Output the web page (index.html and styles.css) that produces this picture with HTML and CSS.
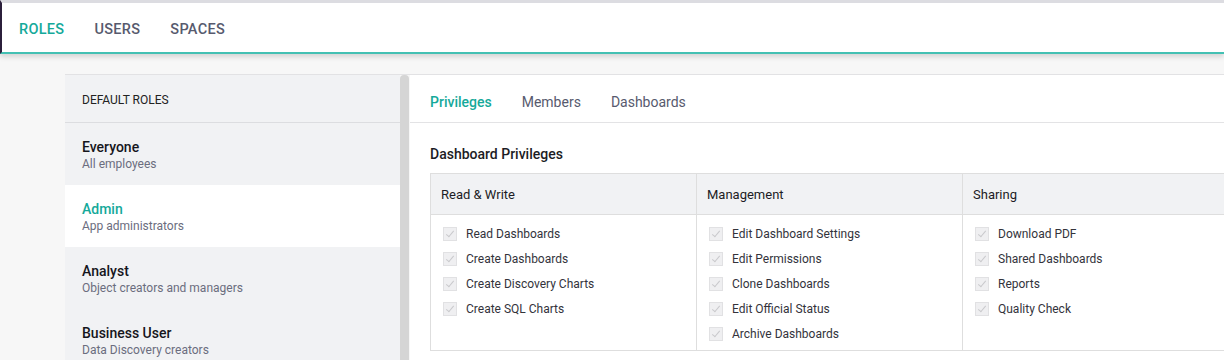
FILE: index.html
```html
<!DOCTYPE html>
<html lang="en">
<head>
  <meta charset="UTF-8">
  <meta name="viewport" content="width=device-width, initial-scale=1.0">
  <title>Roles</title>
  <link rel="stylesheet" href="styles.css">
</head>
<body>

<header class="topbar">
  <nav class="top-tabs">
    <a class="top-tab active">ROLES</a>
    <a class="top-tab">USERS</a>
    <a class="top-tab">SPACES</a>
  </nav>
</header>

<main class="page">
  <aside class="roles">
    <div class="roles-list">
      <div class="roles-head">DEFAULT ROLES</div>
      <div class="role">
        <div class="role-name">Everyone</div>
        <div class="role-desc">All employees</div>
      </div>
      <div class="role selected">
        <div class="role-name">Admin</div>
        <div class="role-desc">App administrators</div>
      </div>
      <div class="role">
        <div class="role-name">Analyst</div>
        <div class="role-desc">Object creators and managers</div>
      </div>
      <div class="role">
        <div class="role-name">Business User</div>
        <div class="role-desc">Data Discovery creators</div>
      </div>
    </div>
    <div class="scrollbar"></div>
  </aside>

  <section class="detail">
    <nav class="sub-tabs">
      <a class="sub-tab active">Privileges</a>
      <a class="sub-tab">Members</a>
      <a class="sub-tab">Dashboards</a>
    </nav>

    <div class="detail-body">
      <h3>Dashboard Privileges</h3>

      <div class="priv-table">
        <div class="priv-col">
          <div class="priv-head">Read &amp; Write</div>
          <ul class="priv-list">
            <li><span class="check"></span>Read Dashboards</li>
            <li><span class="check"></span>Create Dashboards</li>
            <li><span class="check"></span>Create Discovery Charts</li>
            <li><span class="check"></span>Create SQL Charts</li>
          </ul>
        </div>
        <div class="priv-col">
          <div class="priv-head">Management</div>
          <ul class="priv-list">
            <li><span class="check"></span>Edit Dashboard Settings</li>
            <li><span class="check"></span>Edit Permissions</li>
            <li><span class="check"></span>Clone Dashboards</li>
            <li><span class="check"></span>Edit Official Status</li>
            <li><span class="check"></span>Archive Dashboards</li>
          </ul>
        </div>
        <div class="priv-col">
          <div class="priv-head">Sharing</div>
          <ul class="priv-list">
            <li><span class="check"></span>Download PDF</li>
            <li><span class="check"></span>Shared Dashboards</li>
            <li><span class="check"></span>Reports</li>
            <li><span class="check"></span>Quality Check</li>
          </ul>
        </div>
      </div>
    </div>
  </section>
</main>

</body>
</html>
```

FILE: styles.css
```css
body {
  margin: 0;
  font-family: Roboto, "Liberation Sans", Arial, sans-serif;
  background-color: #f7f7f7;
  color: #1c1c24;
  overflow: hidden;
}
.topbar {
  height: 49px;
  background-color: white;
  border-top: 3px solid #dcdce1;
  border-left: 2px solid #2b1f3b;
  border-bottom: 2px solid #43c0b3;
  box-shadow: 0px 3px 5px rgba(0, 0, 0, 0.14);
}
.top-tabs {
  display: flex;
  gap: 30px;
  padding-left: 17px;
  height: 49px;
  align-items: center;
}
.top-tab {
  font-size: 14.5px;
  font-weight: 500;
  letter-spacing: 0.3px;
  color: #575a6e;
  padding-top: 4px;
}
.top-tab.active {
  color: #15a99a;
}
.page {
  display: flex;
  padding: 20px 0 0 65px;
}
.roles {
  display: flex;
  width: 345px;
  flex-shrink: 0;
  border-top: 1px solid #e2e2e4;
}
.roles-list {
  flex: 1;
  background-color: #f1f2f4;
}
.scrollbar {
  width: 9px;
  margin-right: 1px;
  background-color: #d5d5d5;
  border-radius: 4px 4px 0 0;
}
.roles-head {
  height: 47px;
  line-height: 51px;
  padding-left: 17px;
  font-size: 12px;
  color: #222;
  border-bottom: 1px solid #dcdde0;
}
.role {
  height: 62px;
  padding: 15px 0 0 17px;
  box-sizing: border-box;
}
.role.selected {
  background-color: white;
}
.role-name {
  font-size: 14px;
  font-weight: 500;
  color: #16161c;
  line-height: 18px;
}
.role.selected .role-name {
  color: #15a99a;
}
.role-desc {
  font-size: 12px;
  color: #6b6d7e;
  line-height: 16px;
}
.detail {
  flex: 1;
  background-color: white;
  border-top: 1px solid #e2e2e4;
  min-width: 0;
}
.sub-tabs {
  display: flex;
  gap: 30px;
  height: 47px;
  padding: 0 0 0 20px;
  align-items: center;
  border-bottom: 1px solid #e3e3e5;
}
.sub-tab {
  font-size: 14px;
  color: #575a6e;
  padding-top: 7px;
}
.sub-tab.active {
  color: #15a99a;
  font-weight: 500;
}
.detail-body {
  padding: 21px 0 0 20px;
}
h3 {
  margin: 0 0 9px 0;
  font-size: 14px;
  font-weight: 500;
  line-height: 20px;
}
.priv-table {
  display: flex;
  width: 820px;
  border: 1px solid #dedede;
}
.priv-col {
  width: 266px;
  box-sizing: border-box;
  flex-shrink: 0;
  border-left: 1px solid #dedede;
}
.priv-col:first-child {
  width: 265px;
  border-left: none;
}
.priv-head {
  height: 40px;
  line-height: 41px;
  padding-left: 10px;
  font-size: 13px;
  background-color: #f1f2f4;
  border-bottom: 1px solid #dedede;
}
.priv-list {
  list-style: none;
  margin: 0;
  padding: 6px 0 4px 12px;
}
.priv-list li {
  display: flex;
  align-items: center;
  height: 25px;
  font-size: 12px;
  color: #33333b;
}
.check {
  width: 12px;
  height: 12px;
  margin-right: 9px;
  border: 1px solid #e1e1e3;
  background-color: #efeff1;
  position: relative;
}
.check::after {
  content: "";
  position: absolute;
  left: 4px;
  top: 1px;
  width: 3px;
  height: 7px;
  border-right: 1px solid #c9c9cc;
  border-bottom: 1px solid #c9c9cc;
  transform: rotate(40deg);
}
```
